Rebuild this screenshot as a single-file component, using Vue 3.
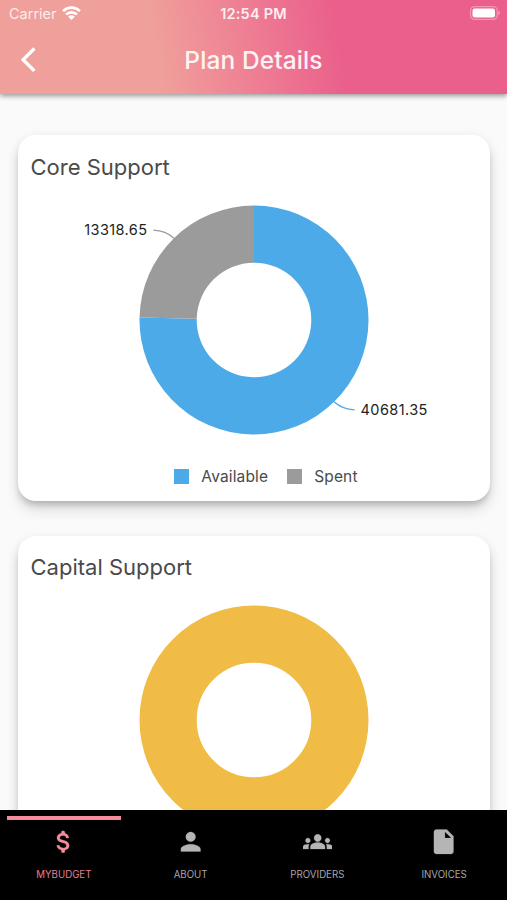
<script setup>
import { computed, ref } from 'vue'

const OUTER = 114.5
const INNER = 57.3

const plans = [
    {
        title: 'Core Support',
        slices: [
            { name: 'Available', value: 40681.35, color: '#4daae8' },
            { name: 'Spent', value: 13318.65, color: '#9b9b9b' },
        ],
    },
    {
        title: 'Capital Support',
        slices: [
            { name: 'Available', value: 12000, color: '#f0bc46' },
        ],
    },
]

const tabs = [
    { name: 'MYBUDGET', icon: 'M11.8 10.9c-2.27-.59-3-1.2-3-2.15 0-1.09 1.01-1.85 2.7-1.85 1.78 0 2.44.85 2.5 2.1h2.21c-.07-1.72-1.12-3.3-3.21-3.81V4.5a1.5 1.5 0 0 0-3 0v.66c-1.94.42-3.5 1.68-3.5 3.61 0 2.31 1.91 3.46 4.7 4.13 2.5.6 3 1.48 3 2.41 0 .69-.49 1.79-2.7 1.79-2.06 0-2.87-.92-2.98-2.1h-2.2c.12 2.19 1.76 3.42 3.68 3.83v.67a1.5 1.5 0 0 0 3 0v-.65c1.95-.37 3.5-1.5 3.5-3.55 0-2.84-2.43-3.81-4.7-4.4z' },
    { name: 'ABOUT', icon: 'M12 12c2.21 0 4-1.79 4-4s-1.79-4-4-4-4 1.79-4 4 1.79 4 4 4zm0 2c-2.67 0-8 1.34-8 4v2h16v-2c0-2.66-5.33-4-8-4z' },
    { name: 'PROVIDERS', icon: 'M12 12.75c1.63 0 3.07.39 4.24.9 1.08.48 1.76 1.56 1.76 2.73V18H6v-1.61c0-1.18.68-2.26 1.76-2.73 1.17-.52 2.61-.91 4.24-.91zM4 13c1.1 0 2-.9 2-2s-.9-2-2-2-2 .9-2 2 .9 2 2 2zm1.13 1.1C4.76 14.04 4.39 14 4 14c-.99 0-1.93.21-2.78.58C.48 14.9 0 15.62 0 16.43V18h4.5v-1.61c0-.83.23-1.61.63-2.29zM20 13c1.1 0 2-.9 2-2s-.9-2-2-2-2 .9-2 2 .9 2 2 2zm4 3.43c0-.81-.48-1.53-1.22-1.85-.85-.37-1.79-.58-2.78-.58-.39 0-.76.04-1.13.1.4.68.63 1.46.63 2.29V18H24v-1.57zM12 6c1.66 0 3 1.34 3 3s-1.34 3-3 3-3-1.34-3-3 1.34-3 3-3z' },
    { name: 'INVOICES', icon: 'M6 2c-1.1 0-2 .9-2 2v16c0 1.1.9 2 2 2h12c1.1 0 2-.9 2-2V7.5L14.5 2H6zm7 7V3.8L18.2 9H13z' },
]

const activeTab = ref('MYBUDGET')

function point(radius, angle) {
    return [radius * Math.sin(angle), -radius * Math.cos(angle)]
}

function ringPath(start, end) {
    const large = end - start > Math.PI ? 1 : 0
    return `M${point(OUTER, start)} A${OUTER} ${OUTER} 0 ${large} 1 ${point(OUTER, end)} L${point(INNER, end)} A${INNER} ${INNER} 0 ${large} 0 ${point(INNER, start)}Z`
}

const charts = computed(() => plans.map(plan => {
    const total = plan.slices.reduce((sum, s) => sum + s.value, 0)
    let angle = 0
    const slices = plan.slices.map(s => {
        const start = angle
        angle += s.value / total * Math.PI * 2
        const [x, y] = point(OUTER, (start + angle) / 2)
        const side = x < 0 ? -1 : 1
        const drop = y < 0 ? -1 : 1
        return {
            ...s,
            path: ringPath(start, angle),
            line: `M${x} ${y} q${side * 8} ${drop * 7.5} ${side * 20.5} ${drop * 8}`,
            labelX: x + side * 26.5,
            labelY: y + drop * 8 + 5,
            anchor: side < 0 ? 'end' : 'start',
        }
    })
    return { ...plan, slices }
}))
</script>

<template>
    <div class="screen">
        <header>
            <div class="status">
                <div class="carrier">
                    <span>Carrier</span>
                    <svg width="19" height="14" viewBox="0 0 19 14">
                        <g fill="none" stroke="#fff" stroke-width="2.7">
                            <path d="M1.1 5.1a12 12 0 0 1 16.8 0" />
                            <path d="M4.1 8.5a7.7 7.7 0 0 1 10.8 0" />
                        </g>
                        <path d="M9.5 14 6.2 10.7a4.6 4.6 0 0 1 6.6 0z" fill="#fff" />
                    </svg>
                </div>
                <span class="time">12:54 PM</span>
                <svg class="battery" width="31" height="14" viewBox="0 0 31 14">
                    <rect x=".6" y=".6" width="26.6" height="12.8" rx="4" fill="none" stroke="#fff" stroke-opacity=".35" stroke-width="1.2" />
                    <rect x="2.5" y="2.5" width="22.5" height="9" rx="2.2" fill="#fff" />
                    <path d="M28.4 4.8c2 .7 2 3.7 0 4.4z" fill="#fff" fill-opacity=".4" />
                </svg>
            </div>
            <div class="titlebar">
                <svg class="back" width="29.4" height="29.4" viewBox="0 0 24 24">
                    <path d="M11.67 3.87 9.9 2.1 0 12l9.9 9.9 1.77-1.77L3.54 12z" fill="#fff" stroke="#fff" stroke-width=".4" stroke-linejoin="round" />
                </svg>
                <h1>Plan Details</h1>
            </div>
        </header>

        <main>
            <section v-for="chart in charts" :key="chart.title" class="card">
                <h2>{{ chart.title }}</h2>
                <svg class="chart" width="472" height="230" viewBox="-236 -115 472 230">
                    <template v-if="chart.slices.length > 1">
                        <g v-for="s in chart.slices" :key="s.name">
                            <path :d="s.path" :fill="s.color" />
                            <path :d="s.line" fill="none" :stroke="s.color" stroke-width="1.3" />
                            <text :x="s.labelX" :y="s.labelY" :text-anchor="s.anchor">{{ s.value }}</text>
                        </g>
                    </template>
                    <circle v-else :r="(OUTER + INNER) / 2" fill="none" :stroke="chart.slices[0].color" :stroke-width="OUTER - INNER" />
                </svg>
                <div v-if="chart.slices.length > 1" class="legend">
                    <div v-for="s in chart.slices" :key="s.name" class="entry">
                        <i :style="{ background: s.color }"></i>
                        <span>{{ s.name }}</span>
                    </div>
                </div>
            </section>
        </main>

        <nav>
            <button v-for="tab in tabs" :key="tab.name" :class="{ active: tab.name == activeTab }" @click="activeTab = tab.name">
                <svg width="29.4" height="29.4" viewBox="0 0 24 24">
                    <path :d="tab.icon" fill="currentColor" fill-rule="evenodd" />
                </svg>
                <span>{{ tab.name }}</span>
            </button>
        </nav>
    </div>
</template>

<style>
body {
    margin: 0;
    overflow: hidden;
}
</style>

<style scoped>
.screen {
    width: 507px;
    height: 900px;
    display: flex;
    flex-direction: column;
    overflow: hidden;
    background: #fafafa;
    font-family: Inter, "Liberation Sans", sans-serif;
}

header {
    height: 94px;
    flex: none;
    z-index: 1;
    background: linear-gradient(80deg, #f0a09b 31%, #ee7d93 50%, #ea5f8b 67%);
    box-shadow: 0 2px 5px rgba(0, 0, 0, 0.4);
    color: #fff;
}

.status {
    height: 27px;
    display: grid;
    grid-template-columns: 1fr auto 1fr;
    align-items: center;
    padding: 0 6px 0 9px;
    font-size: 14.5px;
}

.carrier {
    display: flex;
    align-items: center;
    gap: 5px;
}

.carrier span {
    opacity: 0.8;
}

.carrier svg {
    margin-top: -2px;
}

.time {
    font-weight: 600;
    font-size: 14.5px;
    letter-spacing: 0.2px;
    margin-left: -3px;
    opacity: 0.88;
}

.battery {
    justify-self: end;
    margin-top: -1px;
}

.titlebar {
    height: 65px;
    display: grid;
    grid-template-columns: 1fr auto 1fr;
    align-items: center;
    padding: 0 20.5px;
}

h1 {
    margin: 0;
    font-size: 24.5px;
    font-weight: 500;
    letter-spacing: 0.1px;
    opacity: 0.9;
}

main {
    flex: 1;
    min-height: 0;
    overflow: hidden;
    padding: 41px 17px 0 18px;
    display: flex;
    flex-direction: column;
    gap: 34.5px;
}

.card {
    flex: none;
    height: 366px;
    border-radius: 18px;
    background: #fff;
    box-shadow: 0 5px 6px -2px rgba(0, 0, 0, 0.18), 0 9px 14px rgba(0, 0, 0, 0.12), 0 2px 12px rgba(0, 0, 0, 0.06);
}

h2 {
    margin: 0;
    padding: 16.5px 12.5px 0;
    font-size: 22px;
    line-height: 30px;
    font-weight: 400;
    color: #4a4a4a;
}

.chart {
    display: block;
    margin-top: 23px;
}

.chart text {
    font-size: 14.5px;
    letter-spacing: 0.4px;
    fill: #222;
}

.legend {
    display: flex;
    justify-content: center;
    gap: 19px;
    margin-top: 32px;
    padding-left: 24px;
}

.entry {
    display: flex;
    align-items: center;
    gap: 12px;
    font-size: 15.5px;
    line-height: 20px;
    letter-spacing: 0.15px;
    color: #4a4a4a;
}

.entry i {
    width: 15px;
    height: 15px;
}

nav {
    flex: none;
    height: 90.5px;
    display: flex;
    background: #000;
}

button {
    flex: 1;
    min-width: 0;
    display: flex;
    flex-direction: column;
    align-items: center;
    border: 0;
    margin: 6px 5.5px 0 6.5px;
    padding: 7px 0 0;
    border-top: 4px solid transparent;
    background: none;
    color: #b5b5b5;
    font-family: inherit;
    font-size: 9.7px;
    line-height: 14px;
}

button svg path {
    stroke: currentColor;
    stroke-width: 0.2;
}

button span {
    margin-top: 12px;
    opacity: 0.92;
}

button.active {
    color: #f58c9d;
    border-color: #f58c9d;
}
</style>
